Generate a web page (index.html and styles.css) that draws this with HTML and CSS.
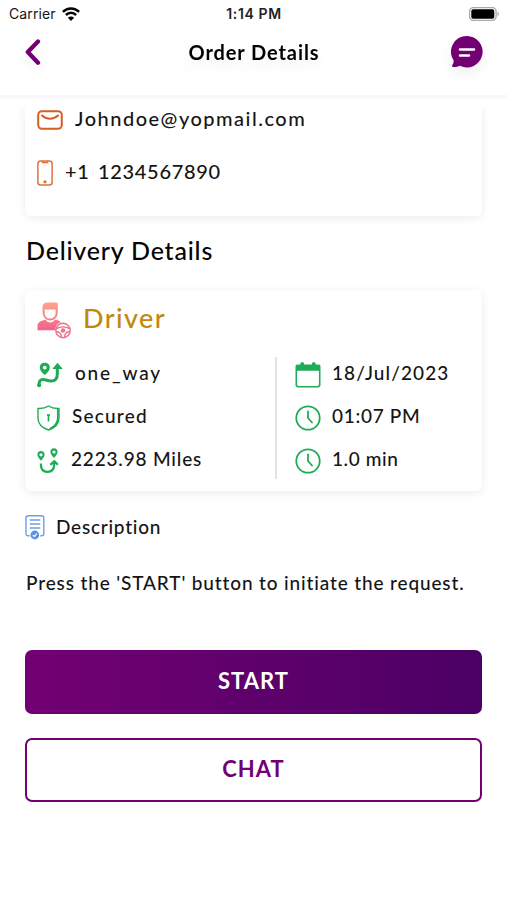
FILE: index.html
```html
<!DOCTYPE html>
<html lang="en">
<head>
<meta charset="utf-8">
<title>Order Details</title>
<link rel="stylesheet" href="styles.css">
</head>
<body>
<svg class="defs" width="0" height="0" aria-hidden="true">
  <defs>
    <linearGradient id="driver-fill" x1="0" y1="0" x2="0" y2="1">
      <stop offset="0" stop-color="#ffa489"/><stop offset="1" stop-color="#f2618d"/>
    </linearGradient>
    <symbol id="clock" viewBox="0 0 26 26">
      <circle cx="13" cy="13" r="11.700" fill="none" stroke="#20ab58" stroke-width="1.800"/>
      <path d="M13 6.500V13l4 4.500" fill="none" stroke="#20ab58" stroke-width="1.800" stroke-linecap="round"/>
    </symbol>
  </defs>
</svg>
<header class="top">
  <div class="status">
    <div class="carrier"><span>Carrier</span>
      <svg width="18" height="14" viewBox="0 0 18 14" fill="none" stroke="#000" stroke-width="2.500"><path d="M.9 4.900C5.400.3 12.600.3 17.100 4.900"/><path d="M3.900 8c2.900-2.900 7.300-2.900 10.200 0"/><path d="M9 14 5.900 10.800c1.800-1.700 4.400-1.700 6.200 0z" fill="#000" stroke="none"/></svg>
    </div>
    <span class="time">1:14 PM</span>
    <svg class="battery" width="31" height="14" viewBox="0 0 31 14"><rect x=".6" y=".6" width="26.500" height="12.800" rx="3.800" fill="#fff" stroke="#aaa" stroke-width="1.400"/><rect x="2.300" y="2.300" width="23" height="9.400" rx="1.800" fill="#000"/><path d="M28.500 4.800c1.800.6 1.800 3.800 0 4.400z" fill="#aaa"/></svg>
  </div>
  <div class="bar">
    <svg class="back" width="17" height="28" viewBox="0 0 17 28"><path d="M14 3.500 3.800 14 14 24.700" fill="none" stroke="#730073" stroke-width="4.300" stroke-linecap="round" stroke-linejoin="round"/></svg>
    <h1 class="title">Order Details</h1>
    <svg class="bubble" width="34" height="34" viewBox="0 0 34 34"><path d="M17 1a15.700 15.700 0 1 1-7 29.800c-2 1-5 1.400-7 1.200-1.200-.2-1.300-1.200-.5-2.200 1-1.400 1.400-3 1-4.700A15.700 15.700 0 0 1 17 1z" fill="#730073"/><path d="M10 14.500h14M10 20.500h9" stroke="#fff" stroke-width="2.500" stroke-linecap="round"/></svg>
  </div>
</header>
<main>
  <section class="card contact">
    <div class="row email">
      <svg width="26" height="20" viewBox="0 0 26 20" fill="none" stroke="#d65e22" stroke-width="2"><rect x="1.200" y="1.200" width="23.600" height="17.600" rx="3.800"/><path d="M5 5.500c4.500 4.200 11.500 4.200 16 0" stroke-linecap="round"/></svg>
      <span>Johndoe@yopmail.com</span>
    </div>
    <div class="row phone">
      <svg width="16" height="26" viewBox="0 0 16 26" fill="none" stroke="#dc733c" stroke-width="1.500"><rect x=".9" y=".9" width="14.200" height="24.200" rx="2.800"/><path d="M5.500 1v1.500h5V1"/><circle cx="8" cy="21.800" r=".9" fill="#dc733c"/></svg>
      <span>+1&nbsp; 1234567890</span>
    </div>
  </section>
  <h2>Delivery Details</h2>
  <section class="card delivery">
    <div class="driver">
      <svg width="36" height="38" viewBox="0 0 36 38"><path fill="url(#driver-fill)" fill-rule="evenodd" d="M5.500 9V5C5.500 2 7.500.4 10.500.4h8.500c1.500 0 1.800.7 1.800 2V10c0 5-2.800 8.400-7.500 8.400S5.500 15 5.500 9zM7.700 7.500V11c0 3.300 2 5.600 5.400 5.600s5.500-2.300 5.500-5.600V7.500zM.5 28.300V24c0-4 4-5.600 8.200-6.200 2 3.600 7 3.600 9 0 2.700.4 4.900 1 6.300 2.300-3.500 1.300-5.700 4.200-6 8.200z"/><g fill="none" stroke="#f06d8c" stroke-width="1.400"><circle cx="26" cy="28.500" r="7.200"/><circle cx="26" cy="28.500" r="1.600" fill="#f06d8c"/><path d="M19.500 26.500c4-2 9-2 13 0M19.500 29.500c3 .2 4.500 2 5 5.500m8-5.500c-3 .2-4.500 2-5 5.500"/></g></svg>
      <span>Driver</span>
    </div>
    <div class="columns">
      <div class="col left">
        <div class="row">
          <svg width="26" height="26" viewBox="0 0 26 26"><path fill="#1dab55" fill-rule="evenodd" d="M7.800.8c-3 0-5 2-5 4.700 0 3 2.800 5.500 5 7.500 2.200-2 5-4.500 5-7.500 0-2.700-2-4.700-5-4.700zm0 2.900a1.900 1.900 0 1 1 0 3.800 1.900 1.900 0 0 1 0-3.800zM20.500.8l5.200 6.200h-10.400z"/><path d="M2 23.500c-.2-5.500 2.500-7 7-5.500 7 2.300 11.300.5 11.300-6V6" fill="none" stroke="#1dab55" stroke-width="3"/><circle cx="2.100" cy="23.200" r="2" fill="#1dab55"/></svg>
          <span class="way">one_way</span>
        </div>
        <div class="row">
          <svg width="23" height="26" viewBox="0 0 23 26" fill="none" stroke="#20ab58"><path d="M11.500 1C8.500 3 4.500 3.700 1 3.500V13c0 6.200 4.500 10 10.500 12C17.500 23 22 19.200 22 13V3.500C18.500 3.700 14.500 3 11.500 1z" stroke-width="1.400"/><path d="M20.800 4v9c0 5.300-3.500 8.600-8 10.700" stroke-width="1.700"/><path d="M11.500 9.500v7M10 10.200h3" stroke-width="1.700"/></svg>
          <span class="secured">Secured</span>
        </div>
        <div class="row">
          <svg width="22" height="26" viewBox="0 0 22 26"><path fill="#1dab55" fill-rule="evenodd" d="M4 3C1.800 3 .4 4.600.4 6.600.4 9 2.400 11 4 12.800 5.600 11 7.600 9 7.600 6.600 7.600 4.600 6.200 3 4 3zm0 2.200a1.600 1.600 0 1 1 0 3.200 1.600 1.600 0 0 1 0-3.200zM17 .2c-2.200 0-3.600 1.600-3.600 3.600 0 2.400 2 4.400 3.600 6.200 1.600-1.800 3.600-3.800 3.600-6.200C20.600 1.800 19.200.2 17 .2zm0 2.200a1.600 1.600 0 1 1 0 3.200 1.600 1.600 0 0 1 0-3.200z"/><path d="M3.800 15.500c0 5.500 2.500 8.400 6.600 8.400s6.900-2.900 6.900-8.400V14M13.300 16.800l4-3.500 3.600 3.500" fill="none" stroke="#1dab55" stroke-width="2.200"/></svg>
          <span>2223.98 Miles</span>
        </div>
      </div>
      <div class="col right">
        <div class="row">
          <svg width="26" height="26" viewBox="0 0 26 26"><path fill="#20ab58" fill-rule="evenodd" d="M2.500 2.500h3V1.200c0-1.300 3.500-1.300 3.500 0v1.300h8V1.200c0-1.300 3.500-1.300 3.500 0v1.300h3c1.300 0 2 .8 2 2V23c0 1.500-1 2.500-2.500 2.500H3C1.500 25.500.5 24.500.5 23V4.500c0-1.200.8-2 2-2zM2.100 8.800V22.500c0 .9.500 1.400 1.400 1.400h19c.9 0 1.400-.5 1.400-1.400V8.800z"/></svg>
          <span class="date">18/Jul/2023</span>
        </div>
        <div class="row"><svg width="26" height="26"><use href="#clock"/></svg><span class="clock">01:07 PM</span></div>
        <div class="row"><svg width="26" height="26"><use href="#clock"/></svg><span class="duration">1.0 min</span></div>
      </div>
    </div>
  </section>
  <div class="desc">
    <svg width="20" height="25" viewBox="0 0 20 25" fill="none" stroke="#6d9eea"><path d="M4.500 20.800H3c-1.300 0-2-.7-2-2V3.300C1 1.700 1.800.8 3.400.8h13.200c1.500 0 2.200 1 2.200 2.500v15.500c0 1.300-.7 2-2 2h-1.500" stroke-width="1.400"/><path d="M4.800 5h10.500M4.800 9h10.500M4.800 13h10.500" stroke-width="1.600"/><circle cx="9.800" cy="20" r="4.400" fill="#5f92e3" stroke="none"/><path d="m7.800 20.200 1.500 1.300 2.700-2.900" stroke="#fff" stroke-width="1.200"/></svg>
    <span>Description</span>
  </div>
  <p class="hint">Press the 'START' button to initiate the request.</p>
  <button class="btn primary">START</button>
  <button class="btn outline">CHAT</button>
</main>
</body>
</html>
```
FILE: styles.css
```css
* { box-sizing: border-box; }
body { margin: 0; width: 507px; height: 900px; overflow: hidden; background: #fff; color: #151515; font: 500 19px/26px Lato, sans-serif; font-variant-ligatures: none; }
.defs { position: absolute; }
svg { display: block; flex: none; }
h1, h2, p { margin: 0; }
.top { height: 97px; border-bottom: 2px solid #f7f7f7; box-shadow: 0 1px 2px #0000000a; }
.status { height: 28px; display: grid; grid-template-columns: 1fr auto 1fr; align-items: center; padding: 0 7px 0 9px; font-family: Inter, sans-serif; font-size: 14px; }
.carrier { display: flex; align-items: center; gap: 6px; font-weight: 400; letter-spacing: .1px; }
.time { font-weight: 600; letter-spacing: .6px; color: #222; margin-right: 1px; }
.battery { justify-self: end; }
.bar { height: 48px; display: grid; grid-template-columns: 1fr auto 1fr; align-items: center; padding: 0 23px 0 24px; color: #000; }
.title { font-size: 20px; font-weight: 700; line-height: 26px; letter-spacing: .9px; }
.bubble { justify-self: end; }
.back, .title, .bubble { filter: drop-shadow(0 6px 6px #00000010); }
main { padding: 0 25px; }
.card { background: #fff; border-radius: 6px; box-shadow: 0 2px 10px #00000014; }
.row { display: flex; align-items: center; }
.row span { padding-bottom: 4px; }
.contact { height: 110px; margin-top: 9px; padding: 2px 12px 0; border-radius: 0 0 6px 6px; clip-path: inset(0 -12px -14px -12px); }
.email { height: 24px; gap: 12px; font-size: 20px; letter-spacing: 1.5px; }
.phone { height: 26px; gap: 12px; margin-top: 28px; font-size: 20px; letter-spacing: .7px; word-spacing: -1.6px; }
.phone span { padding-bottom: 5px; }
h2 { margin-top: 19px; padding-left: 1px; font-size: 25px; font-weight: 500; line-height: 30px; letter-spacing: .8px; color: #050505; }
.delivery { height: 201px; margin-top: 25px; padding: 12px 12px 0; }
.driver { display: flex; gap: 10px; height: 38px; font-size: 27px; letter-spacing: 1.4px; color: #c3870f; }
.driver span { line-height: 31px; }
.columns { display: flex; margin-top: 17px; height: 122px; }
.col { display: grid; align-content: start; row-gap: 17px; padding-top: 5px; letter-spacing: .82px; }
.left { width: 240px; border-right: 2px solid #e2e2e2; }
.right { padding-left: 18px; }
.col .row { height: 26px; gap: 12px; }
.col .row + .row span { padding-bottom: 5px; }
.right .row { gap: 11px; }
.way { letter-spacing: 1.8px; }
.secured { letter-spacing: 1.2px; }
.date { letter-spacing: 1.1px; }
.clock { letter-spacing: .7px; }
.duration { letter-spacing: .6px; }
.desc { display: flex; align-items: center; gap: 11px; height: 26px; margin-top: 23px; letter-spacing: .75px; }
.hint { margin-top: 30px; padding-left: 1px; white-space: nowrap; letter-spacing: .86px; }
.btn { display: block; width: 457px; height: 64px; border-radius: 7px; font: 700 22px/28px Lato, sans-serif; letter-spacing: 1px; padding: 0 0 2px; }
.primary { margin-top: 54px; border: 0; color: #fff; background: linear-gradient(90deg, #730073, #4b0064); }
.outline { margin-top: 24px; border: 2px solid #730073; color: #730073; background: #fff; }
```
